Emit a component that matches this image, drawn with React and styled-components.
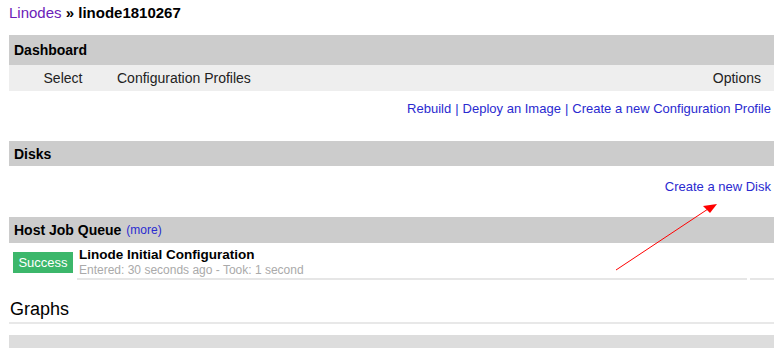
import styled, { createGlobalStyle } from "styled-components";

const Global = createGlobalStyle`
  body {
    margin: 0;
    background: #fff;
    font-family: "Liberation Sans", Arial, sans-serif;
    font-size: 14px;
    color: #000;
  }
  a { text-decoration: none; }
`;

const Page = styled.div`
  position: relative;
  width: 765px;
  padding: 4px 0 0 9px;
  height: 344px;
  overflow: hidden;
`;

const Crumbs = styled.div`
  font-size: 15px;
  line-height: 18px;
  height: 31px;
  a { color: #6b21b8; }
  b { font-weight: bold; }
`;

const Bar = styled.div`
  background: #ccc;
  height: ${(p) => p.h || 30}px;
  display: flex;
  align-items: center;
  padding-left: 5px;
  font-weight: bold;
  font-size: 14px;
`;

const More = styled.a`
  color: #2a2ad0;
  font-weight: normal;
  font-size: 12px;
  margin-left: 5px;
`;

const SubRow = styled.div`
  background: #eee;
  height: 26px;
  display: flex;
  align-items: center;
  font-size: 14px;
  color: #222;
`;

const Col = styled.div`
  width: ${(p) => p.w}px;
  text-align: ${(p) => p.align || "left"};
  flex: ${(p) => (p.grow ? 1 : "none")};
  padding-right: ${(p) => p.pr || 0}px;
`;

const Actions = styled.div`
  display: flex;
  justify-content: flex-end;
  align-items: center;
  height: ${(p) => p.h}px;
  padding-right: 3px;
  font-size: 13px;
  color: #2a2ad0;
  a { color: #2a2ad0; }
`;

const Sep = styled.span`
  margin: 0 4px;
`;

const JobRow = styled.div`
  display: flex;
  align-items: flex-start;
  height: 35px;
  margin-top: 1px;
`;

const Badge = styled.div`
  margin: 8px 0 0 4px;
  width: 60px;
  height: 21px;
  background: #3cb76b;
  color: #fff;
  font-size: 13px;
  display: flex;
  align-items: center;
  justify-content: center;
`;

const JobInfo = styled.div`
  margin-left: 4px;
  flex: 1;
  display: flex;
`;

const JobText = styled.div`
  flex: 1;
  padding: 3px 0 0 2px;
  height: 31px;
  border-bottom: 2px solid #e6e6e6;
`;

const JobTitle = styled.div`
  font-weight: bold;
  font-size: 13.5px;
  line-height: 16px;
`;

const JobMeta = styled.div`
  color: #aaa;
  font-size: 12px;
  line-height: 14px;
`;

const JobSide = styled.div`
  width: 24px;
  margin-left: 3px;
  height: 34px;
  border-bottom: 2px solid #e6e6e6;
`;

const Heading = styled.h2`
  margin: 0;
  margin-top: 17px;
  font-weight: normal;
  font-size: 18px;
  line-height: 26px;
  padding-left: 1px;
  border-bottom: 2px solid #e8e8e8;
`;

const GraphBar = styled.div`
  margin-top: 11px;
  height: 20px;
  background: #ddd;
`;

const Arrow = styled.svg`
  position: absolute;
  left: 0;
  top: 0;
  pointer-events: none;
`;

export default function App() {
  return (
    <>
      <Global />
      <Page>
        <Crumbs>
          <a href="#">Linodes</a> <b>» linode1810267</b>
        </Crumbs>

        <Bar>Dashboard</Bar>
        <SubRow>
          <Col w={108} align="center">Select</Col>
          <Col grow>Configuration Profiles</Col>
          <Col w={80} align="right" pr={13}>Options</Col>
        </SubRow>
        <Actions h={35}>
          <a href="#">Rebuild</a>
          <Sep>|</Sep>
          <a href="#">Deploy an Image</a>
          <Sep>|</Sep>
          <a href="#">Create a new Configuration Profile</a>
        </Actions>

        <div style={{ height: 15 }} />
        <Bar h={25}>Disks</Bar>
        <Actions h={41}>
          <a href="#">Create a new Disk</a>
        </Actions>

        <div style={{ height: 10 }} />
        <Bar h={26}>
          Host Job Queue <More href="#">(more)</More>
        </Bar>
        <JobRow>
          <Badge>Success</Badge>
          <JobInfo>
            <JobText>
              <JobTitle>Linode Initial Configuration</JobTitle>
              <JobMeta>Entered: 30 seconds ago - Took: 1 second</JobMeta>
            </JobText>
            <JobSide />
          </JobInfo>
        </JobRow>

        <Heading>Graphs</Heading>
        <GraphBar />

        <Arrow width="784" height="348">
          <line x1="616" y1="270" x2="708" y2="209" stroke="#f00" strokeWidth="1" />
          <polygon points="717,204 703,206 710,213" fill="#f00" />
        </Arrow>
      </Page>
    </>
  );
}
